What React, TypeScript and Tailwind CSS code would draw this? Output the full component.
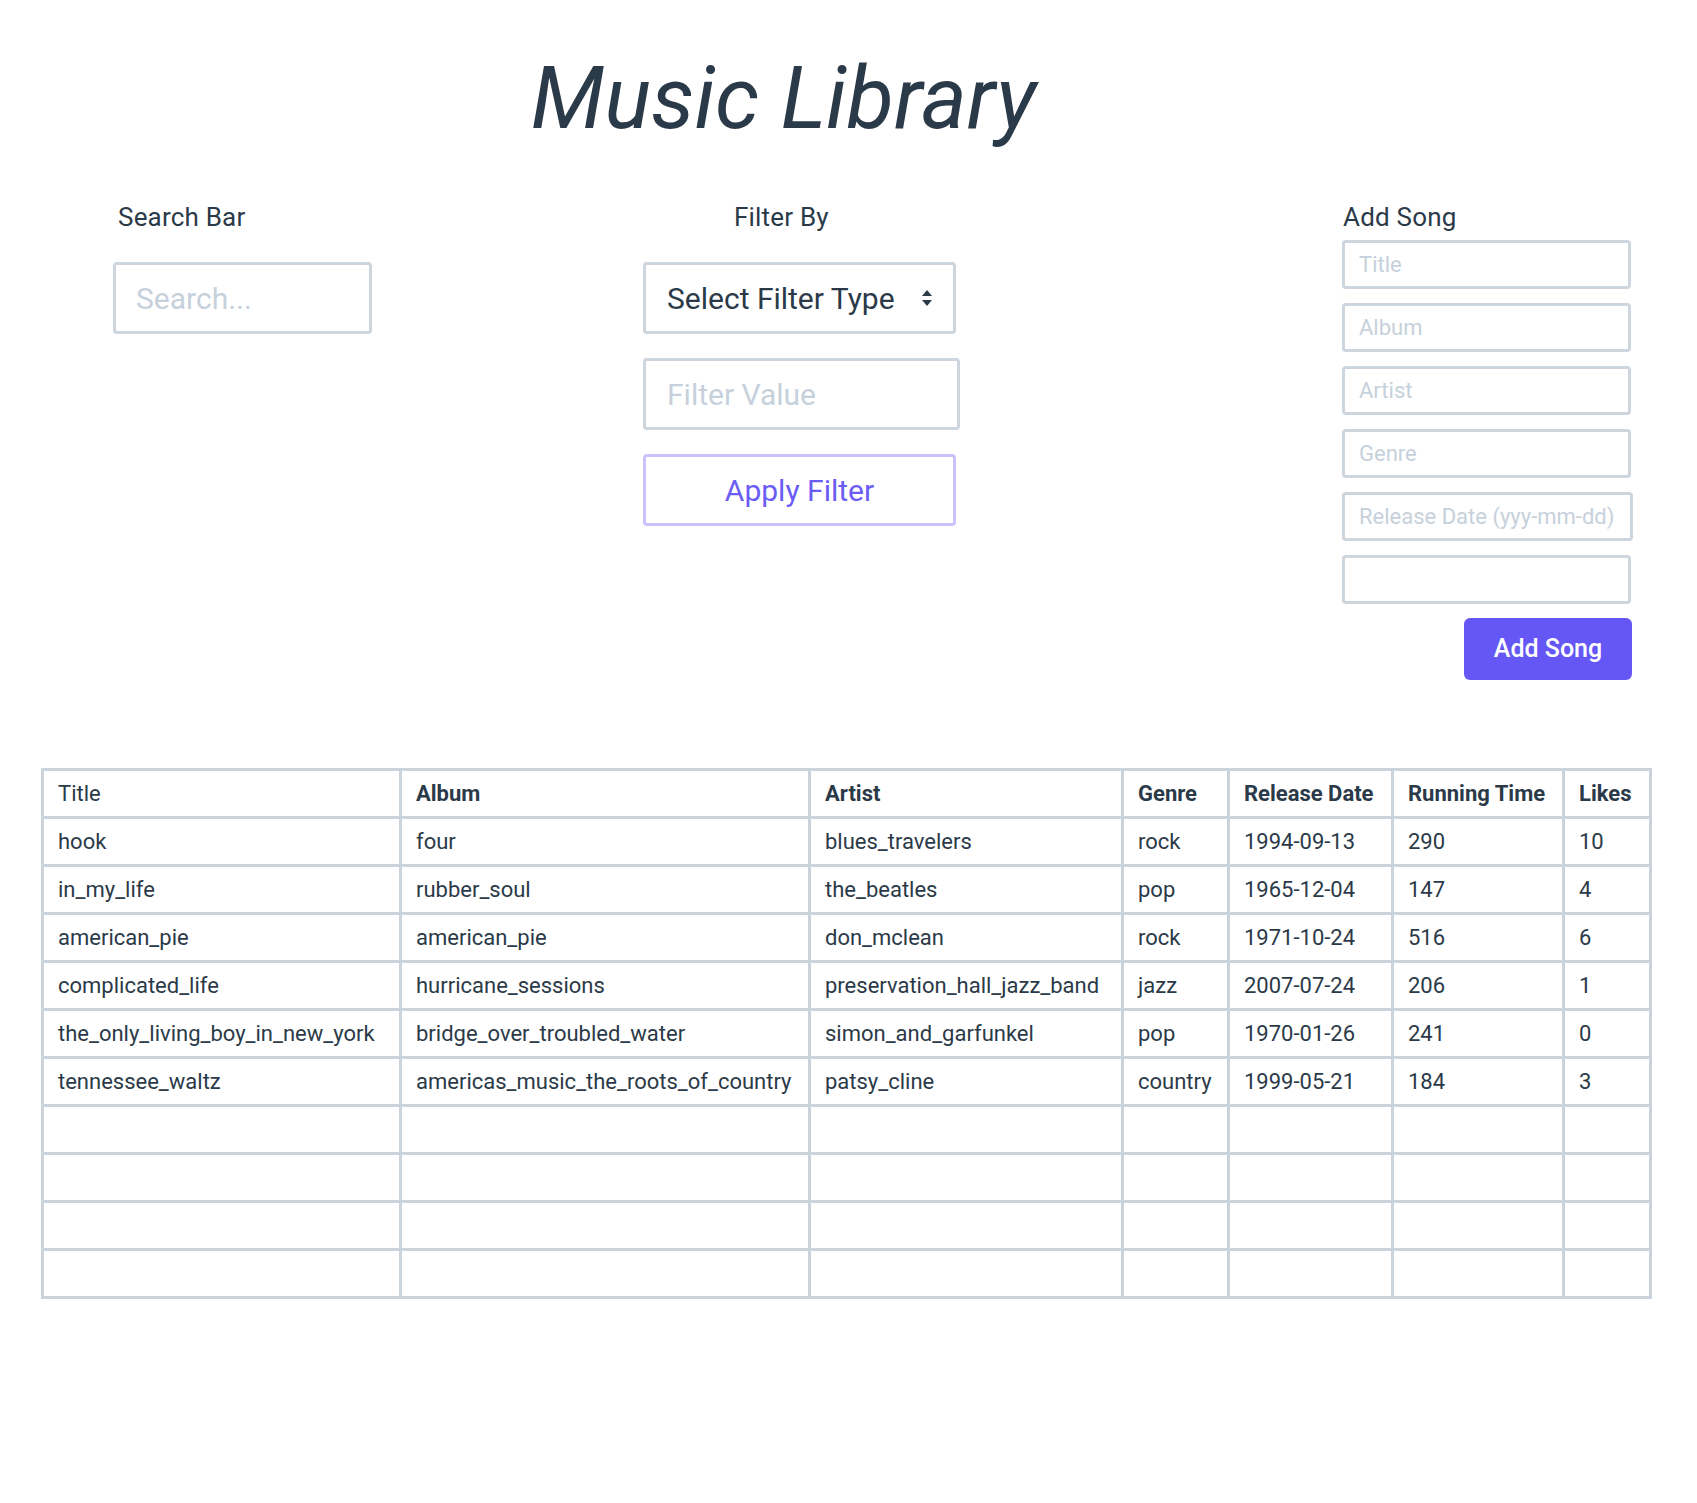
const songs = [
  ['hook', 'four', 'blues_travelers', 'rock', '1994-09-13', '290', '10'],
  ['in_my_life', 'rubber_soul', 'the_beatles', 'pop', '1965-12-04', '147', '4'],
  ['american_pie', 'american_pie', 'don_mclean', 'rock', '1971-10-24', '516', '6'],
  ['complicated_life', 'hurricane_sessions', 'preservation_hall_jazz_band', 'jazz', '2007-07-24', '206', '1'],
  ['the_only_living_boy_in_new_york', 'bridge_over_troubled_water', 'simon_and_garfunkel', 'pop', '1970-01-26', '241', '0'],
  ['tennessee_waltz', 'americas_music_the_roots_of_country', 'patsy_cline', 'country', '1999-05-21', '184', '3'],
];

const headers = ['Title', 'Album', 'Artist', 'Genre', 'Release Date', 'Running Time', 'Likes'];
const colWidths = ['w-[358px]', 'w-[409px]', 'w-[313px]', 'w-[106px]', 'w-[164px]', 'w-[171px]', 'w-[87px]'];

function SortArrows() {
  return (
    <svg width="12" height="18" viewBox="0 0 12 18" className="text-[#2b3a48]">
      <path d="M6 1 L11 7 H1 Z" fill="currentColor" />
      <path d="M6 17 L11 11 H1 Z" fill="currentColor" />
    </svg>
  );
}

function App() {
  return (
    <div className="min-h-screen bg-white pt-[55px] text-[#2b3a48] font-['Roboto','Liberation_Sans',sans-serif]">
      <h1 className="pr-[130px] text-center text-[87px] italic leading-none font-normal">Music Library</h1>

      <div className="mt-[62px] flex pl-[113px]">
        {/* search */}
        <div className="w-[259px] flex flex-col">
          <label className="ml-[5px] text-[26px] leading-none tracking-[0.2px]">Search Bar</label>
          <input
            className="mt-[32px] h-[72px] w-[259px] rounded-[4px] border-[3px] border-[#cdd5de] pl-[20px] text-[30px] outline-none placeholder:text-[#c6d1db]"
            placeholder="Search..."
          />
        </div>

        {/* filter */}
        <div className="ml-[271px] w-[317px] flex flex-col">
          <label className="ml-[91px] text-[26px] leading-none tracking-[0.2px]">Filter By</label>
          <button className="mt-[32px] flex h-[72px] w-[313px] items-center justify-between rounded-[4px] border-[3px] border-[#cdd5de] pl-[21px] pr-[20px] text-[30px]">
            <span>Select Filter Type</span>
            <SortArrows />
          </button>
          <input
            className="mt-[24px] h-[72px] w-[317px] rounded-[4px] border-[3px] border-[#cdd5de] pl-[21px] text-[30px] outline-none placeholder:text-[#c6d1db]"
            placeholder="Filter Value"
          />
          <button className="mt-[24px] h-[72px] w-[313px] rounded-[4px] border-[3px] border-[#c9c2fb] text-[30px] text-[#6a5cf4]">
            Apply Filter
          </button>
        </div>

        {/* add song */}
        <div className="ml-[382px] w-[291px] flex flex-col">
          <label className="ml-[1px] text-[26px] leading-none tracking-[0.2px]">Add Song</label>
          <div className="mt-[10px] flex flex-col gap-[14px]">
            {['Title', 'Album', 'Artist', 'Genre', 'Release Date (yyy-mm-dd)', ''].map((p, i) => (
              <input
                key={i}
                className={`h-[49px] ${i === 4 ? 'w-[291px]' : 'w-[289px]'} rounded-[4px] border-[3px] border-[#cdd5de] pl-[14px] text-[22px] outline-none placeholder:text-[#c6d1db]`}
                placeholder={p}
              />
            ))}
          </div>
          <button className="mt-[14px] ml-[122px] h-[62px] w-[168px] rounded-[6px] bg-[#6557f5] text-[25px] font-medium text-white">
            Add Song
          </button>
        </div>
      </div>

      <table className="ml-[41px] mt-[88px] w-[1608px] table-fixed border-collapse text-[22px]">
        <colgroup>
          {colWidths.map((w, i) => (
            <col key={i} className={w} />
          ))}
        </colgroup>
        <thead>
          <tr>
            {headers.map((h, i) => (
              <th
                key={h}
                className={`h-[48px] border-[3px] border-[#cbd4dd] px-[14px] text-left whitespace-nowrap ${i === 0 ? 'font-normal' : 'font-bold'}`}
              >
                {h}
              </th>
            ))}
          </tr>
        </thead>
        <tbody>
          {songs.map((row) => (
            <tr key={row[0]}>
              {row.map((c, i) => (
                <td key={i} className="h-[48px] border-[3px] border-[#cbd4dd] px-[14px] whitespace-nowrap">
                  {c}
                </td>
              ))}
            </tr>
          ))}
          {[0, 1, 2, 3].map((r) => (
            <tr key={`e${r}`}>
              {headers.map((h) => (
                <td key={h} className="h-[48px] border-[3px] border-[#cbd4dd]" />
              ))}
            </tr>
          ))}
        </tbody>
      </table>
    </div>
  );
}

export default App;
